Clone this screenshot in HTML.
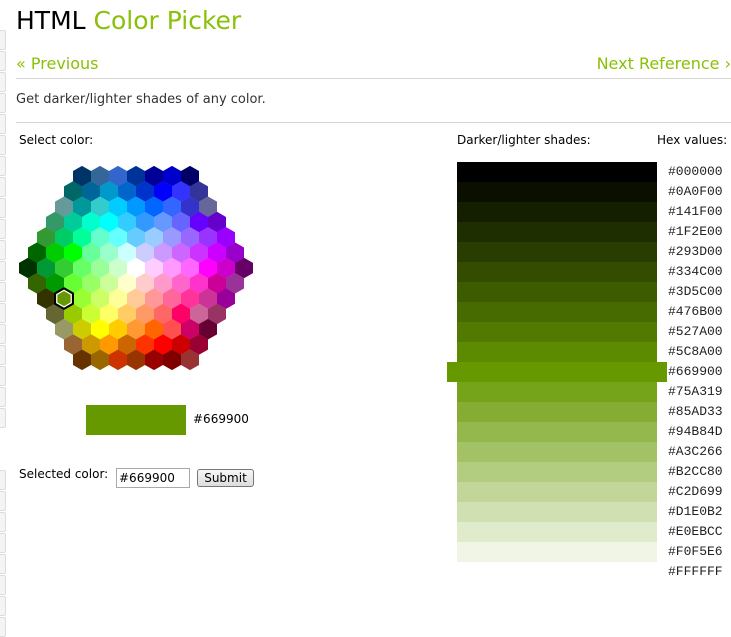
<!DOCTYPE html>
<html><head><meta charset="utf-8"><style>
body{margin:0;width:731px;height:635px;overflow:hidden;background:#fff;font-family:"DejaVu Sans","Liberation Sans",sans-serif;color:#222;position:relative}
.a{position:absolute;white-space:nowrap}
.sb{position:absolute;left:-4px;width:8px;height:18px;border:1px solid #ddd;background:#f4f4f4;border-radius:2px}
.hr{position:absolute;left:16px;right:0;height:1px;background:#d4d4d4}
.sh{position:absolute;left:457px;width:200px;height:20px}
.hx{position:absolute;left:668px;font-family:"Liberation Mono",monospace;font-size:13px;color:#222}
</style></head><body>
<div class="sb" style="top:30px"></div><div class="sb" style="top:51px"></div><div class="sb" style="top:72px"></div><div class="sb" style="top:93px"></div><div class="sb" style="top:114px"></div><div class="sb" style="top:135px"></div><div class="sb" style="top:156px"></div><div class="sb" style="top:177px"></div><div class="sb" style="top:198px"></div><div class="sb" style="top:219px"></div><div class="sb" style="top:240px"></div><div class="sb" style="top:261px"></div><div class="sb" style="top:282px"></div><div class="sb" style="top:303px"></div><div class="sb" style="top:324px"></div><div class="sb" style="top:345px"></div><div class="sb" style="top:366px"></div><div class="sb" style="top:387px"></div><div class="sb" style="top:408px"></div><div class="sb" style="top:470px"></div><div class="sb" style="top:491px"></div><div class="sb" style="top:512px"></div><div class="sb" style="top:533px"></div><div class="sb" style="top:554px"></div><div class="sb" style="top:575px"></div><div class="sb" style="top:596px"></div><div class="sb" style="top:617px"></div>
<div class="a" style="left:16px;top:6px;font-size:25px;color:#000">HTML <span style="color:#8AC007">Color Picker</span></div>
<div class="a" style="left:16px;top:54px;font-size:16px;color:#8AC007">« Previous</div>
<div class="a" style="right:0;top:54px;font-size:16px;color:#8AC007">Next Reference ›</div>
<div class="hr" style="top:78px"></div>
<div class="a" style="left:16px;top:92px;font-size:13px;color:#333">Get darker/lighter shades of any color.</div>
<div class="hr" style="top:122px"></div>
<div class="a" style="left:19px;top:133px;font-size:12px;color:#000">Select color:</div>
<div class="a" style="left:457px;top:133px;font-size:12px;color:#000">Darker/lighter shades:</div>
<div class="a" style="left:657px;top:133px;font-size:12px;color:#000">Hex values:</div>
<svg class="a" style="left:0;top:0" width="300" height="400">
<defs><polygon id="h" points="0,-10.3 9,-5.15 9,5.15 0,10.3 -9,5.15 -9,-5.15"/></defs>
<g transform="translate(82,176.2)"><use href="#h" x="0" fill="#003366"/><use href="#h" x="18" fill="#336699"/><use href="#h" x="36" fill="#3366CC"/><use href="#h" x="54" fill="#003399"/><use href="#h" x="72" fill="#000099"/><use href="#h" x="90" fill="#0000CC"/><use href="#h" x="108" fill="#000066"/></g>
<g transform="translate(73,191.5)"><use href="#h" x="0" fill="#006666"/><use href="#h" x="18" fill="#006699"/><use href="#h" x="36" fill="#0099CC"/><use href="#h" x="54" fill="#0066CC"/><use href="#h" x="72" fill="#0033CC"/><use href="#h" x="90" fill="#0000FF"/><use href="#h" x="108" fill="#3333FF"/><use href="#h" x="126" fill="#333399"/></g>
<g transform="translate(64,206.8)"><use href="#h" x="0" fill="#669999"/><use href="#h" x="18" fill="#009999"/><use href="#h" x="36" fill="#33CCCC"/><use href="#h" x="54" fill="#00CCFF"/><use href="#h" x="72" fill="#0099FF"/><use href="#h" x="90" fill="#0066FF"/><use href="#h" x="108" fill="#3366FF"/><use href="#h" x="126" fill="#3333CC"/><use href="#h" x="144" fill="#666699"/></g>
<g transform="translate(55,222.1)"><use href="#h" x="0" fill="#339966"/><use href="#h" x="18" fill="#00CC99"/><use href="#h" x="36" fill="#00FFCC"/><use href="#h" x="54" fill="#00FFFF"/><use href="#h" x="72" fill="#33CCFF"/><use href="#h" x="90" fill="#3399FF"/><use href="#h" x="108" fill="#6699FF"/><use href="#h" x="126" fill="#6666FF"/><use href="#h" x="144" fill="#6600FF"/><use href="#h" x="162" fill="#6600CC"/></g>
<g transform="translate(46,237.4)"><use href="#h" x="0" fill="#339933"/><use href="#h" x="18" fill="#00CC66"/><use href="#h" x="36" fill="#00FF99"/><use href="#h" x="54" fill="#66FFCC"/><use href="#h" x="72" fill="#66FFFF"/><use href="#h" x="90" fill="#66CCFF"/><use href="#h" x="108" fill="#99CCFF"/><use href="#h" x="126" fill="#9999FF"/><use href="#h" x="144" fill="#9966FF"/><use href="#h" x="162" fill="#9933FF"/><use href="#h" x="180" fill="#9900FF"/></g>
<g transform="translate(37,252.7)"><use href="#h" x="0" fill="#006600"/><use href="#h" x="18" fill="#00CC00"/><use href="#h" x="36" fill="#00FF00"/><use href="#h" x="54" fill="#66FF99"/><use href="#h" x="72" fill="#99FFCC"/><use href="#h" x="90" fill="#CCFFFF"/><use href="#h" x="108" fill="#CCCCFF"/><use href="#h" x="126" fill="#CC99FF"/><use href="#h" x="144" fill="#CC66FF"/><use href="#h" x="162" fill="#CC33FF"/><use href="#h" x="180" fill="#CC00FF"/><use href="#h" x="198" fill="#9900CC"/></g>
<g transform="translate(28,268)"><use href="#h" x="0" fill="#003300"/><use href="#h" x="18" fill="#009933"/><use href="#h" x="36" fill="#33CC33"/><use href="#h" x="54" fill="#66FF66"/><use href="#h" x="72" fill="#99FF99"/><use href="#h" x="90" fill="#CCFFCC"/><use href="#h" x="108" fill="#FFFFFF"/><use href="#h" x="126" fill="#FFCCFF"/><use href="#h" x="144" fill="#FF99FF"/><use href="#h" x="162" fill="#FF66FF"/><use href="#h" x="180" fill="#FF00FF"/><use href="#h" x="198" fill="#CC00CC"/><use href="#h" x="216" fill="#660066"/></g>
<g transform="translate(37,283.3)"><use href="#h" x="0" fill="#336600"/><use href="#h" x="18" fill="#009900"/><use href="#h" x="36" fill="#66FF33"/><use href="#h" x="54" fill="#99FF66"/><use href="#h" x="72" fill="#CCFF99"/><use href="#h" x="90" fill="#FFFFCC"/><use href="#h" x="108" fill="#FFCCCC"/><use href="#h" x="126" fill="#FF99CC"/><use href="#h" x="144" fill="#FF66CC"/><use href="#h" x="162" fill="#FF33CC"/><use href="#h" x="180" fill="#CC0099"/><use href="#h" x="198" fill="#993399"/></g>
<g transform="translate(46,298.6)"><use href="#h" x="0" fill="#333300"/><use href="#h" x="18" fill="#669900"/><use href="#h" x="36" fill="#99FF33"/><use href="#h" x="54" fill="#CCFF66"/><use href="#h" x="72" fill="#FFFF99"/><use href="#h" x="90" fill="#FFCC99"/><use href="#h" x="108" fill="#FF9999"/><use href="#h" x="126" fill="#FF6699"/><use href="#h" x="144" fill="#FF3399"/><use href="#h" x="162" fill="#CC3399"/><use href="#h" x="180" fill="#990099"/></g>
<g transform="translate(55,313.9)"><use href="#h" x="0" fill="#666633"/><use href="#h" x="18" fill="#99CC00"/><use href="#h" x="36" fill="#CCFF33"/><use href="#h" x="54" fill="#FFFF66"/><use href="#h" x="72" fill="#FFCC66"/><use href="#h" x="90" fill="#FF9966"/><use href="#h" x="108" fill="#FF6666"/><use href="#h" x="126" fill="#FF0066"/><use href="#h" x="144" fill="#CC6699"/><use href="#h" x="162" fill="#993366"/></g>
<g transform="translate(64,329.2)"><use href="#h" x="0" fill="#999966"/><use href="#h" x="18" fill="#CCCC00"/><use href="#h" x="36" fill="#FFFF00"/><use href="#h" x="54" fill="#FFCC00"/><use href="#h" x="72" fill="#FF9933"/><use href="#h" x="90" fill="#FF6600"/><use href="#h" x="108" fill="#FF5050"/><use href="#h" x="126" fill="#CC0066"/><use href="#h" x="144" fill="#660033"/></g>
<g transform="translate(73,344.5)"><use href="#h" x="0" fill="#996633"/><use href="#h" x="18" fill="#CC9900"/><use href="#h" x="36" fill="#FF9900"/><use href="#h" x="54" fill="#CC6600"/><use href="#h" x="72" fill="#FF3300"/><use href="#h" x="90" fill="#FF0000"/><use href="#h" x="108" fill="#CC0000"/><use href="#h" x="126" fill="#990033"/></g>
<g transform="translate(82,359.8)"><use href="#h" x="0" fill="#663300"/><use href="#h" x="18" fill="#996600"/><use href="#h" x="36" fill="#CC3300"/><use href="#h" x="54" fill="#993300"/><use href="#h" x="72" fill="#990000"/><use href="#h" x="90" fill="#800000"/><use href="#h" x="108" fill="#993333"/></g>
<g transform="translate(64,298.6)"><polygon points="0,-10.3 9,-5.15 9,5.15 0,10.3 -9,5.15 -9,-5.15" fill="#669900" stroke="#000" stroke-width="2"/><polygon points="0,-8.3 7.2,-4.15 7.2,4.15 0,8.3 -7.2,4.15 -7.2,-4.15" fill="#669900" stroke="#fff" stroke-width="1.2"/></g>
</svg>
<div class="a" style="left:86px;top:405px;width:100px;height:30px;background:#669900"></div>
<div class="a" style="left:193px;top:412px;font-size:12px;color:#000">#669900</div>
<div class="a" style="left:19px;top:467px;font-size:12px;color:#000">Selected color:</div>
<div class="a" style="left:116px;top:468px;border:1px solid #aaa;font-size:12px;line-height:18px;padding-left:2px;box-sizing:border-box;width:74px;height:20px;color:#000">#669900</div>
<div class="a" style="left:197px;top:469px;width:57px;height:18px;border:1px solid #777;border-radius:3px;background:linear-gradient(#f6f6f6,#ddd);box-sizing:border-box;font-size:12px;text-align:center;line-height:16px;color:#000">Submit</div>
<div class="sh" style="top:162px;background:#000000"></div><div class="hx" style="top:164px">#000000</div>
<div class="sh" style="top:182px;background:#0A0F00"></div><div class="hx" style="top:184px">#0A0F00</div>
<div class="sh" style="top:202px;background:#141F00"></div><div class="hx" style="top:204px">#141F00</div>
<div class="sh" style="top:222px;background:#1F2E00"></div><div class="hx" style="top:224px">#1F2E00</div>
<div class="sh" style="top:242px;background:#293D00"></div><div class="hx" style="top:244px">#293D00</div>
<div class="sh" style="top:262px;background:#334C00"></div><div class="hx" style="top:264px">#334C00</div>
<div class="sh" style="top:282px;background:#3D5C00"></div><div class="hx" style="top:284px">#3D5C00</div>
<div class="sh" style="top:302px;background:#476B00"></div><div class="hx" style="top:304px">#476B00</div>
<div class="sh" style="top:322px;background:#527A00"></div><div class="hx" style="top:324px">#527A00</div>
<div class="sh" style="top:342px;background:#5C8A00"></div><div class="hx" style="top:344px">#5C8A00</div>
<div class="sh" style="top:362px;left:447px;width:220px;background:#669900"></div><div class="hx" style="top:364px">#669900</div>
<div class="sh" style="top:382px;background:#75A319"></div><div class="hx" style="top:384px">#75A319</div>
<div class="sh" style="top:402px;background:#85AD33"></div><div class="hx" style="top:404px">#85AD33</div>
<div class="sh" style="top:422px;background:#94B84D"></div><div class="hx" style="top:424px">#94B84D</div>
<div class="sh" style="top:442px;background:#A3C266"></div><div class="hx" style="top:444px">#A3C266</div>
<div class="sh" style="top:462px;background:#B2CC80"></div><div class="hx" style="top:464px">#B2CC80</div>
<div class="sh" style="top:482px;background:#C2D699"></div><div class="hx" style="top:484px">#C2D699</div>
<div class="sh" style="top:502px;background:#D1E0B2"></div><div class="hx" style="top:504px">#D1E0B2</div>
<div class="sh" style="top:522px;background:#E0EBCC"></div><div class="hx" style="top:524px">#E0EBCC</div>
<div class="sh" style="top:542px;background:#F0F5E6"></div><div class="hx" style="top:544px">#F0F5E6</div>
<div class="sh" style="top:562px;background:#FFFFFF"></div><div class="hx" style="top:564px">#FFFFFF</div>
</body></html>
